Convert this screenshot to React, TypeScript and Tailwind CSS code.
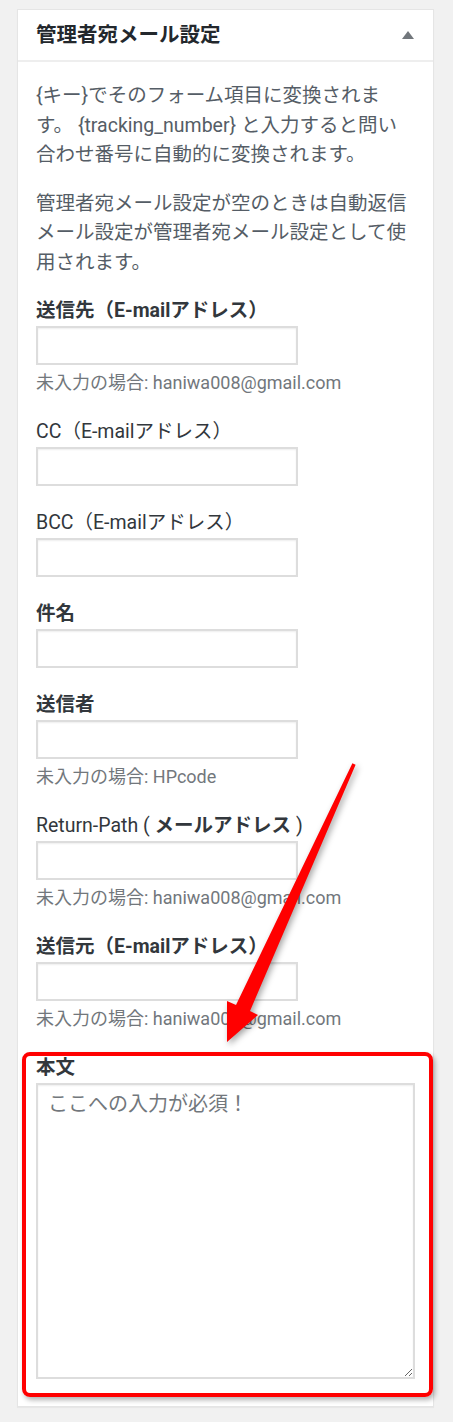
import React from 'react';

const font = { fontFamily: 'Roboto, "Noto Sans CJK JP", sans-serif' };

interface FieldProps {
  label: React.ReactNode;
  bold?: boolean;
  hint?: string;
}

const Field: React.FC<FieldProps> = ({ label, bold = true, hint }) => (
  <div className="flex flex-col">
    <label className={`text-[19.5px] leading-[29px] mb-px text-[#32373c] ${bold ? 'font-bold' : 'font-normal'}`}>
      {label}
    </label>
    <input
      type="text"
      className="w-[262px] h-[39px] border-2 border-[#dddddd] bg-white shadow-[inset_0_1px_2px_rgba(0,0,0,0.07)] outline-none"
    />
    {hint && (
      <p className="mt-[5px] text-[18px] leading-[25px] text-[#72777c]">{hint}</p>
    )}
  </div>
);

export default function App() {
  return (
    <div className="relative w-[453px] min-h-[1422px] bg-[#f1f1f1] pt-[9px] pl-[17px]" style={font}>
      {/* Metabox */}
      <div className="w-[417px] bg-white border border-[#e5e5e5] shadow-[0_1px_1px_rgba(0,0,0,0.04)]">
        {/* Header */}
        <div className="h-[52px] flex items-center justify-between pl-[18px] pr-[19px] border-b-2 border-[#eeeeee]">
          <h2 className="text-[20.5px] font-bold text-[#23282d]">管理者宛メール設定</h2>
          <span className="w-0 h-0 border-l-[6px] border-r-[6px] border-b-[8px] border-l-transparent border-r-transparent border-b-[#72777c]" />
        </div>

        {/* Body */}
        <div className="px-[18px] pt-[19px] pb-[27px]">
          <p className="text-[19.5px] leading-[29.5px] text-[#555d66]">
            {'{キー}でそのフォーム項目に変換されます。 {tracking_number} と入力すると問い合わせ番号に自動的に変換されます。'}
          </p>
          <p className="mt-[19px] text-[19.5px] leading-[29.5px] text-[#555d66]">
            管理者宛メール設定が空のときは自動返信メール設定が管理者宛メール設定として使用されます。
          </p>

          <div className="mt-[19px] flex flex-col gap-[22px]">
            <Field label="送信先（E-mailアドレス）" hint="未入力の場合: haniwa008@gmail.com" />
            <Field label="CC（E-mailアドレス）" bold={false} />
            <Field label="BCC（E-mailアドレス）" bold={false} />
            <Field label="件名" />
            <Field label="送信者" hint="未入力の場合: HPcode" />
            <Field
              bold={false}
              label={
                <>
                  Return-Path ( <span className="font-bold">メールアドレス</span> )
                </>
              }
              hint="未入力の場合: haniwa008@gmail.com"
            />
            <Field label="送信元（E-mailアドレス）" hint="未入力の場合: haniwa008@gmail.com" />

            {/* Body text field, highlighted */}
            <div className="relative flex flex-col">
              <label className="text-[19.5px] leading-[29px] mb-px font-bold text-[#32373c]">本文</label>
              <textarea
                placeholder="ここへの入力が必須！"
                className="w-full h-[296px] border-2 border-[#dddddd] bg-white pl-[10px] pt-[5px] text-[20px] leading-[29px] placeholder:text-[#72777c] shadow-[inset_0_1px_2px_rgba(0,0,0,0.07)] outline-none"
                style={font}
              />
              <div className="absolute -left-[14px] -right-[18px] -top-px -bottom-[18px] border-4 border-[#ff0000] rounded-[8px] shadow-[2px_3px_5px_rgba(0,0,0,0.3)] pointer-events-none" />
            </div>
          </div>
        </div>
      </div>

      {/* Annotation arrow */}
      <svg
        className="absolute left-0 top-0 pointer-events-none drop-shadow-[2px_3px_3px_rgba(0,0,0,0.35)]"
        width="453"
        height="1422"
        viewBox="0 0 453 1422"
      >
        <polygon
          fill="#ff0000"
          points="352.4,763.2 355.6,764.8 250,1011 258,1015 227,1042 227,1001 236,1005"
        />
      </svg>
    </div>
  );
}
